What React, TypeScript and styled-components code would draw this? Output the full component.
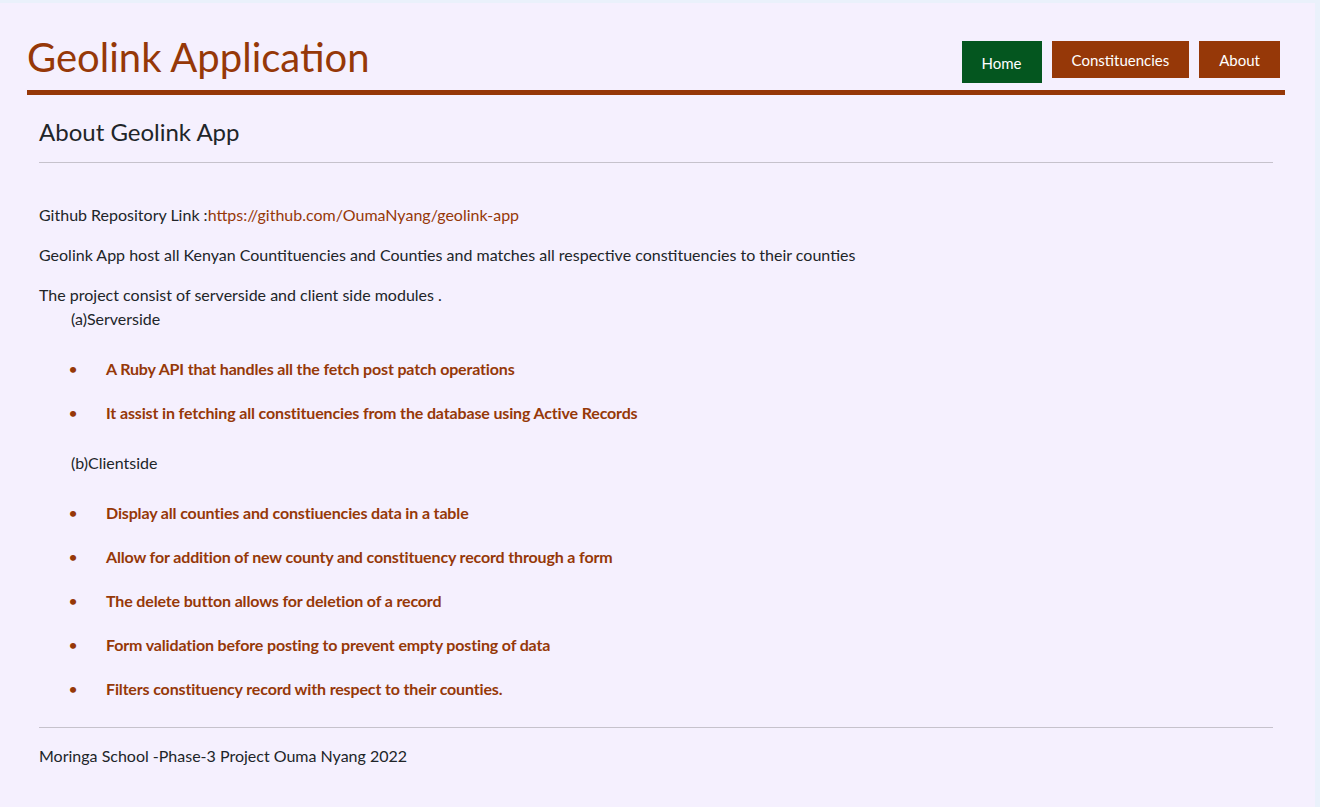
import React from "react";
import styled, { createGlobalStyle } from "styled-components";

const GlobalStyle = createGlobalStyle`
  html, body {
    margin: 0;
    padding: 0;
    background: #eaf1fb;
  }
  body {
    font-family: Lato, "Open Sans", Arial, sans-serif;
    color: #212529;
  }
`;

const brown = "#963808";

const Page = styled.div`
  margin: 3px 5px 0 0;
  background: #f5f0fe;
  min-height: 804px;
  padding: 0 30px 0 27px;
  box-sizing: border-box;
`;

const Header = styled.header`
  display: flex;
  align-items: flex-start;
  justify-content: space-between;
  padding-top: 30px;
  border-bottom: 5px solid ${brown};
`;

const Brand = styled.h1`
  margin: 0 0 9px 0;
  font-size: 40px;
  font-weight: 400;
  line-height: 48px;
  color: ${brown};
`;

const Nav = styled.nav`
  display: flex;
  gap: 10px;
  padding-top: 8px;
  margin-right: 5px;
`;

const NavButton = styled.a<{ $active?: boolean }>`
  display: flex;
  align-items: center;
  justify-content: center;
  height: ${(p) => (p.$active ? "42px" : "37px")};
  padding: ${(p) => (p.$active ? "2px 20px 0" : "0 20px")};
  box-sizing: border-box;
  background: ${(p) => (p.$active ? "#04561f" : brown)};
  color: #fff;
  font-size: 15px;
  text-decoration: none;
  cursor: pointer;
`;

const Content = styled.main`
  padding: 0 12px;
`;

const Title = styled.h2`
  margin: 0;
  padding-top: 23px;
  font-size: 24px;
  font-weight: 400;
  line-height: 28px;
`;

const Rule = styled.hr<{ $gap: number }>`
  border: 0;
  border-top: 1px solid #c6c2cc;
  margin: ${(p) => p.$gap}px 0 0 0;
`;

const Para = styled.p<{ $top: number }>`
  margin: ${(p) => p.$top}px 0 0 0;
  font-size: 16px;
  line-height: 24px;
`;

const Link = styled.a`
  color: ${brown};
  text-decoration: none;
`;

const Sub = styled.div<{ $top?: number }>`
  margin: ${(p) => p.$top ?? 0}px 0 0 32px;
  font-size: 16px;
  line-height: 24px;
`;

const List = styled.ul`
  list-style: none;
  margin: 0;
  padding: 6px 0 0 0;
`;

const Item = styled.li`
  display: flex;
  margin-top: 20px;
  font-size: 16px;
  font-weight: 700;
  letter-spacing: -0.15px;
  line-height: 24px;
  color: ${brown};
  &::before {
    content: "•";
    width: 37px;
    margin-left: 30px;
    flex: none;
    font-size: 14px;
  }
`;

const Footer = styled.footer`
  padding: 16px 0 40px;
  font-size: 16px;
  line-height: 24px;
`;

const server = [
  "A Ruby API that handles all the fetch post patch operations",
  "It assist in fetching all constituencies from the database using Active Records",
];

const client = [
  "Display all counties and constiuencies data in a table",
  "Allow for addition of new county and constituency record through a form",
  "The delete button allows for deletion of a record",
  "Form validation before posting to prevent empty posting of data",
  "Filters constituency record with respect to their counties.",
];

export default function App() {
  return (
    <>
      <GlobalStyle />
      <Page>
        <Header>
          <Brand>Geolink Application</Brand>
          <Nav>
            <NavButton $active>Home</NavButton>
            <NavButton>Constituencies</NavButton>
            <NavButton>About</NavButton>
          </Nav>
        </Header>
        <Content>
          <Title>About Geolink App</Title>
          <Rule $gap={16} />
          <Para $top={40}>
            Github Repository Link :
            <Link href="#">https://github.com/OumaNyang/geolink-app</Link>
          </Para>
          <Para $top={16}>
            Geolink App host all Kenyan Countituencies and Counties and matches all respective
            constituencies to their counties
          </Para>
          <Para $top={16}>The project consist of serverside and client side modules .</Para>
          <Sub>(a)Serverside</Sub>
          <List>
            {server.map((s) => (
              <Item key={s}>{s}</Item>
            ))}
          </List>
          <Sub $top={26}>(b)Clientside</Sub>
          <List>
            {client.map((s) => (
              <Item key={s}>{s}</Item>
            ))}
          </List>
          <Rule $gap={26} />
          <Footer>Moringa School -Phase-3 Project Ouma Nyang 2022</Footer>
        </Content>
      </Page>
    </>
  );
}
